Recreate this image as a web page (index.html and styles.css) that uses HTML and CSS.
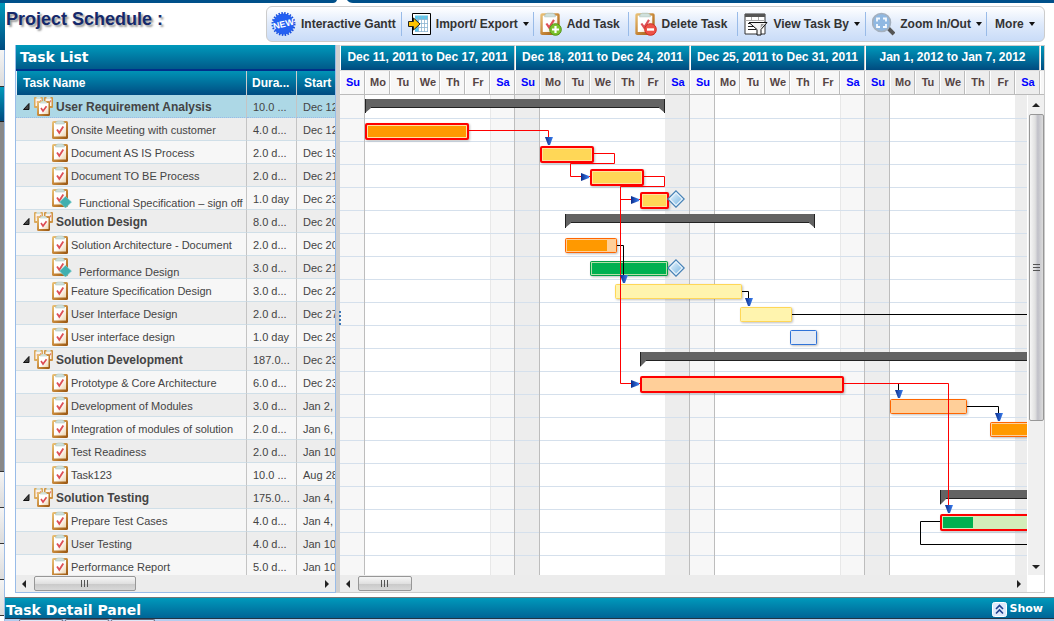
FILE: index.html
```html
<!DOCTYPE html>
<html lang="en">
<head>
<meta charset="utf-8">
<title>Project Schedule</title>
<link rel="stylesheet" href="styles.css">
</head>
<body>
<svg class="defs" aria-hidden="true">
  <defs>
    <linearGradient id="wood" x1="0" y1="0" x2="1" y2="1">
      <stop offset="0" stop-color="#ecc67c"/><stop offset=".5" stop-color="#c8893a"/><stop offset="1" stop-color="#96530f"/>
    </linearGradient>
    <linearGradient id="paper" x1="0" y1="0" x2="1" y2="1">
      <stop offset=".5" stop-color="#ffffff"/><stop offset="1" stop-color="#ecd2ac"/>
    </linearGradient>
    <linearGradient id="sky" x1="0" y1="0" x2="1" y2="1">
      <stop offset="0" stop-color="#e2f1fc"/><stop offset="1" stop-color="#7db8e2"/>
    </linearGradient>
    <linearGradient id="arrowBlue" x1="0" y1="0" x2="1" y2="0">
      <stop offset="0" stop-color="#0a2c8c"/><stop offset="1" stop-color="#3c80f0"/>
    </linearGradient>
    <symbol id="clip" viewBox="0 0 16 19">
      <rect x="0" y="1" width="16" height="18" rx="1.500" fill="url(#wood)"/>
      <rect x="2" y="3" width="12" height="13.500" fill="url(#paper)"/>
      <path d="M3.500 4q0-3 2.500-3h4q2.500 0 2.500 3z" fill="#cfe0dc" stroke="#a9c0ba" stroke-width=".5"/>
      <path d="M5 9.500l2.300 3.300L11.300 6.500" fill="none" stroke="#dc5058" stroke-width="1.800"/>
    </symbol>
    <symbol id="group" viewBox="0 0 19 20">
      <rect x="0" y="1" width="9" height="11" rx="1" fill="#dba95a"/><rect x="1.500" y="2.500" width="6" height="7.500" fill="#fbf3ea"/>
      <path d="M2.500 1h4v2h-4z" fill="#cfe0dc"/>
      <path d="M3 5.500l1.500 2L7 4.500" fill="none" stroke="#e07870" stroke-width="1.300"/>
      <rect x="10" y="1" width="9" height="11" rx="1" fill="#cf9342"/><rect x="11.500" y="2.500" width="6" height="7.500" fill="#fbf3ea"/>
      <path d="M12.500 1h4v2h-4z" fill="#cfe0dc"/>
      <path d="M13 5.500l1.500 2L17 4.500" fill="none" stroke="#e07870" stroke-width="1.300"/>
      <rect x="3" y="5" width="13" height="15" rx="1.500" fill="url(#wood)"/><rect x="5" y="7" width="9.500" height="11" fill="url(#paper)"/>
      <path d="M6 7.500q0-2.500 3.500-2.500t3.500 2.500z" fill="#cfe0dc"/>
      <path d="M7 12l2 3L12.500 10.200" fill="none" stroke="#dc4a52" stroke-width="1.600"/>
    </symbol>
    <symbol id="mile" viewBox="0 0 20 20">
      <use href="#clip" x="0" y="0" width="16" height="19"/>
      <path d="M13.500 8.500l6 5.500-6 6-6-6z" fill="#3fb0b0" stroke="#7fd0ce" stroke-width=".6"/>
    </symbol>
    <symbol id="fold" viewBox="0 0 7 7"><path d="M6 0.500v6H0.500z" fill="#444" stroke="#111"/></symbol>
    <symbol id="down" viewBox="0 0 8 8"><path d="M0 0h8L5 8H3z" fill="url(#arrowBlue)"/></symbol>
    <symbol id="right" viewBox="0 0 8 8"><path d="M0 0v8l8-3V3z" fill="url(#arrowBlue)"/></symbol>
    <symbol id="diamond" viewBox="0 0 18 18">
      <path d="M9 .8L17.200 9 9 17.200.8 9z" fill="#e9f4fc" stroke="#4580b5" stroke-width="1.200"/>
      <path d="M9 3.500L14.500 9 9 14.500 3.500 9z" fill="url(#sky)"/>
    </symbol>
  </defs>
</svg>

<div class="topline"><svg class="notch" viewBox="0 0 20 3" aria-hidden="true"><path d="M0 3q3 0 4-3h10q2 3 6 3z" fill="#fff"/></svg></div>
<div class="page">
  <div class="rail" aria-hidden="true">
    <i class="r-blue r-first"></i><i class="r-light r-a"></i><i class="r-blue r-b"></i><i class="r-gray"></i><i class="r-light"></i><i class="r-light"></i><i class="r-light"></i><i class="r-light"></i>
  </div>
  <main class="main">
    <header class="head">
      <h1>Project Schedule :</h1>
      <div class="toolbar">
        <button type="button"><svg class="ic" width="25" height="24" viewBox="0 0 25 24"><circle cx="12.500" cy="12" r="10.500" fill="#2460f2"/><circle cx="12.500" cy="12" r="11" fill="none" stroke="#1a50dc" stroke-width="2" stroke-dasharray="1.500 1.400"/><text class="newtag" x="12.500" y="15" transform="rotate(-14 12.500 12)">NEW</text></svg><span>Interactive Gantt</span></button>
        <button type="button"><svg class="ic" width="23" height="24" viewBox="0 0 23 24"><path d="M4.500 1.500h18v21h-18z" fill="#fff" stroke="#000"/><path d="M7 3.500h13v4H7zM7 8h3.500v12H7z" fill="#5cc8ec"/><path d="M7 7.500h13M7 11.500h13M7 15.500h13M7 19.500h13M10.500 4v16M13.500 4v16M16.500 4v16M19.500 4v16" stroke="#8ab4d0" stroke-width=".8" fill="none"/><path d="M.5 9.500h5v-3.500l6.500 6-6.500 6v-3.500h-5z" fill="#ffc400" stroke="#222"/></svg><span>Import/ Export</span><i class="caret"></i></button>
        <button type="button"><svg class="ic" width="22" height="24" viewBox="0 0 22 24"><use href="#clip" width="20" height="23"/><circle cx="15.500" cy="17.500" r="5.800" fill="#7cc22c" stroke="#4f9414"/><path d="M15.500 14v7M12 17.500h7" stroke="#fff" stroke-width="2.200"/></svg><span>Add Task</span></button>
        <button type="button"><svg class="ic" width="22" height="24" viewBox="0 0 22 24"><use href="#clip" width="20" height="23"/><circle cx="15.500" cy="17.500" r="5.800" fill="#ee5348" stroke="#d02a20"/><path d="M12 17.500h7" stroke="#fff" stroke-width="2.400"/></svg><span>Delete Task</span></button>
        <button type="button"><svg class="ic" width="24" height="24" viewBox="0 0 24 24"><path d="M1 2h20v20H1z" fill="#fff" stroke="#333"/><path d="M1 2h20v3H1z" fill="#555"/><path d="M1 8.500h20M7.500 5v4M14.500 5v4" stroke="#aaa"/><path d="M4 11.500h6M4 14.500h8M4 17.500h8" stroke="#222"/><path d="M5 10.500h18l-6 7v5.500h-4v-5.500z" fill="#f2f2f2" stroke="#111"/><path d="M17 12h3l-3.500 4z" fill="#999"/></svg><span>View Task By</span><i class="caret"></i></button>
        <button type="button"><svg class="ic" width="23" height="24" viewBox="0 0 23 24"><path d="M16 16l6 6" stroke="#555" stroke-width="4"/><circle cx="9.500" cy="10.500" r="9" fill="#8fb8e2" stroke="#a4b0be" stroke-width="1.600"/><path d="M5 9.500V6.500h3M11 6.500h3v3M14 12v3h-3M8 15H5v-3" fill="none" stroke="#f5faff" stroke-width="1.800"/></svg><span>Zoom In/Out</span><i class="caret"></i></button>
        <button type="button"><span>More</span><i class="caret"></i></button>
      </div>
    </header>

    <div class="work">
      <section class="tasks">
        <h2>Task List</h2>
        <div class="tbody">
          <table>
            <colgroup><col class="c-name"><col class="c-dur"><col></colgroup>
            <thead><tr><th>Task Name</th><th>Dura...</th><th>Start</th></tr></thead>
            <tbody>
              <tr class="sel"><td><div class="grp"><svg class="f"><use href="#fold"/></svg><svg class="g"><use href="#group"/></svg><span>User Requirement Analysis</span></div></td><td>10.0 ...</td><td>Dec 12</td></tr>
              <tr><td><div class="tk"><svg class="c"><use href="#clip"/></svg><span>Onsite Meeting with customer</span></div></td><td>4.0 d...</td><td>Dec 12</td></tr>
              <tr><td><div class="tk"><svg class="c"><use href="#clip"/></svg><span>Document AS IS Process</span></div></td><td>2.0 d...</td><td>Dec 19</td></tr>
              <tr><td><div class="tk"><svg class="c"><use href="#clip"/></svg><span>Document TO BE Process</span></div></td><td>2.0 d...</td><td>Dec 21</td></tr>
              <tr><td><div class="tk ms"><svg class="m"><use href="#mile"/></svg><span>Functional Specification – sign off</span></div></td><td>1.0 day</td><td>Dec 23</td></tr>
              <tr><td><div class="grp"><svg class="f"><use href="#fold"/></svg><svg class="g"><use href="#group"/></svg><span>Solution Design</span></div></td><td>8.0 d...</td><td>Dec 20</td></tr>
              <tr><td><div class="tk"><svg class="c"><use href="#clip"/></svg><span>Solution Architecture - Document</span></div></td><td>2.0 d...</td><td>Dec 20</td></tr>
              <tr><td><div class="tk ms"><svg class="m"><use href="#mile"/></svg><span>Performance Design</span></div></td><td>3.0 d...</td><td>Dec 21</td></tr>
              <tr><td><div class="tk"><svg class="c"><use href="#clip"/></svg><span>Feature Specification Design</span></div></td><td>3.0 d...</td><td>Dec 22</td></tr>
              <tr><td><div class="tk"><svg class="c"><use href="#clip"/></svg><span>User Interface Design</span></div></td><td>2.0 d...</td><td>Dec 27</td></tr>
              <tr><td><div class="tk"><svg class="c"><use href="#clip"/></svg><span>User interface design</span></div></td><td>1.0 day</td><td>Dec 29</td></tr>
              <tr><td><div class="grp"><svg class="f"><use href="#fold"/></svg><svg class="g"><use href="#group"/></svg><span>Solution Development</span></div></td><td>187.0...</td><td>Dec 23</td></tr>
              <tr><td><div class="tk"><svg class="c"><use href="#clip"/></svg><span>Prototype &amp; Core Architecture</span></div></td><td>6.0 d...</td><td>Dec 23</td></tr>
              <tr><td><div class="tk"><svg class="c"><use href="#clip"/></svg><span>Development of Modules</span></div></td><td>3.0 d...</td><td>Jan 2,</td></tr>
              <tr><td><div class="tk"><svg class="c"><use href="#clip"/></svg><span>Integration of modules of solution</span></div></td><td>2.0 d...</td><td>Jan 6,</td></tr>
              <tr><td><div class="tk"><svg class="c"><use href="#clip"/></svg><span>Test Readiness</span></div></td><td>2.0 d...</td><td>Jan 10</td></tr>
              <tr><td><div class="tk"><svg class="c"><use href="#clip"/></svg><span>Task123</span></div></td><td>10.0 ...</td><td>Aug 28</td></tr>
              <tr><td><div class="grp"><svg class="f"><use href="#fold"/></svg><svg class="g"><use href="#group"/></svg><span>Solution Testing</span></div></td><td>175.0...</td><td>Jan 4,</td></tr>
              <tr><td><div class="tk"><svg class="c"><use href="#clip"/></svg><span>Prepare Test Cases</span></div></td><td>4.0 d...</td><td>Jan 4,</td></tr>
              <tr><td><div class="tk"><svg class="c"><use href="#clip"/></svg><span>User Testing</span></div></td><td>4.0 d...</td><td>Jan 10</td></tr>
              <tr><td><div class="tk"><svg class="c"><use href="#clip"/></svg><span>Performance Report</span></div></td><td>5.0 d...</td><td>Jan 10</td></tr>
            </tbody>
          </table>
        </div>
        <div class="hscroll"><i class="al"></i><div class="track"><b class="thumb t-left"></b></div><i class="ar"></i></div>
      </section>

      <div class="split"><i class="grip"></i></div>

      <section class="chart">
        <div class="weeks">
          <div class="week"><h3>Dec 11, 2011 to Dec 17, 2011</h3><div class="days"><span>Su</span><span>Mo</span><span>Tu</span><span>We</span><span>Th</span><span>Fr</span><span>Sa</span></div></div>
          <div class="week"><h3>Dec 18, 2011 to Dec 24, 2011</h3><div class="days"><span>Su</span><span>Mo</span><span>Tu</span><span>We</span><span>Th</span><span>Fr</span><span>Sa</span></div></div>
          <div class="week"><h3>Dec 25, 2011 to Dec 31, 2011</h3><div class="days"><span>Su</span><span>Mo</span><span>Tu</span><span>We</span><span>Th</span><span>Fr</span><span>Sa</span></div></div>
          <div class="week"><h3>Jan 1, 2012 to Jan 7, 2012</h3><div class="days"><span>Su</span><span>Mo</span><span>Tu</span><span>We</span><span>Th</span><span>Fr</span><span>Sa</span></div></div>
          <div class="week"><h3></h3><div class="days"><span></span></div></div>
        </div>
        <div class="body">
          <div class="canvas">
            <svg class="gantt" width="760" height="480" viewBox="340 95 760 480" role="img" aria-label="Gantt chart">
              <defs><pattern id="rows" x="340" y="96" width="10" height="23" patternUnits="userSpaceOnUse"><path d="M0 22.500h10" stroke="#d5e0ec"/></pattern></defs>
              <g fill="#f7f7f7"><path d="M340 95h24v480h-24zM490 95h24v480h-24zM690 95h24v480h-24zM840 95h24v480h-24z"/></g>
              <g fill="#ededed"><path d="M515 95h24v480h-24zM665 95h24v480h-24zM865 95h24v480h-24zM1015 95h24v480h-24z"/></g>
              <path d="M490.500 95v480M840.500 95v480" stroke="#e8e8e8"/>
              <rect x="340" y="96" width="760" height="479" fill="url(#rows)"/>
              <path d="M364.500 95v480M514.500 95v480M539.500 95v480M689.500 95v480M714.500 95v480M864.500 95v480M889.500 95v480" stroke="#bdbdbd"/>

              <g class="sum">
                <path d="M365 99h300v14l-6-5H371l-6 5z"/><path d="M565 214h250v14l-6-5H571l-6 5z"/><path d="M640 352h460v9H646l-6 6z"/><path d="M940 490h160v9H946l-6 6z"/>
              </g>
              <path class="edge" d="M365.500 99v14M371 107.500h288M664.500 99v14M565.500 214v14M571 222.500h238M814.500 214v14M640.500 352v14M646 360.500h454M940.500 490v14M946 498.500h154"/>

              <g class="bars">
                <rect class="crit" x="366" y="124" width="102" height="15" rx="1" fill="#ff9900"/>
                <rect class="crit" x="541" y="147" width="52" height="15" rx="1" fill="#ffd757"/>
                <rect class="crit" x="591" y="170" width="52" height="15" rx="1" fill="#ffd757"/>
                <rect class="crit" x="641" y="193" width="27" height="15" rx="1" fill="#ffd757"/>
                <rect class="crit" x="641" y="377" width="202" height="15" rx="1" fill="#ffcf99"/>
                <rect class="crit" x="941" y="515" width="180" height="15" rx="1" fill="#d3edb9"/>
                <rect x="943" y="517" width="30" height="11" fill="#00b050"/>
                <rect x="565.500" y="238.500" width="51" height="14" rx="1" fill="#ffcf99" stroke="#ff6600"/>
                <rect x="567" y="240" width="40" height="11" fill="#ff9900"/>
                <rect x="590.500" y="261.500" width="77" height="14" rx="1" fill="#00b050" stroke="#00a045"/>
                <rect x="591.500" y="262.500" width="75" height="12" fill="none" stroke="#b5dfa8"/>
                <rect x="615.500" y="284.500" width="126" height="14" rx="1" fill="#fff4ae" stroke="#ffd757"/>
                <rect x="740.500" y="307.500" width="51" height="14" rx="1" fill="#fff4ae" stroke="#ffd757"/>
                <rect x="790.500" y="330.500" width="26" height="14" rx="1" fill="#e3ebf7" stroke="#2f73d8"/>
                <rect x="890.500" y="399.500" width="76" height="14" rx="1" fill="#ffcf99" stroke="#ff6600"/>
                <rect x="990.500" y="422.500" width="100" height="14" rx="1" fill="#ff9900" stroke="#ff6600"/>
                <rect x="991.500" y="423.500" width="98" height="12" fill="none" stroke="#ffcf99"/>
              </g>
              <g class="halo"><path d="M367.500 125.500h99v12h-99zM542.500 148.500h49v12h-49zM592.500 171.500h49v12h-49zM642.500 194.500h24v12h-24z"/></g>

              <g fill="none" stroke="#000">
                <path d="M617 245.500h6.500V276M742 291.500h6.500V299M792 314.500h308M898.500 384v7M967 406.500h31.500V414M940 521.500h-19.500v23h180"/>
              </g>
              <g fill="none" stroke="#f00">
                <path d="M469 130.500h79.500V138M594 153.500h20.500v10h-44v13H590M644 176.500h20.500v10h-44v197H640M620.500 199.500H640M844 383.500h104.500V506"/>
              </g>
              <g>
                <use href="#down" x="545" y="137" width="8" height="8"/><use href="#right" x="581" y="173" width="8" height="8"/><use href="#right" x="631" y="196" width="8" height="8"/><use href="#right" x="631" y="380" width="8" height="8"/>
                <use href="#down" x="620" y="275" width="8" height="8"/><use href="#down" x="745" y="298" width="8" height="8"/><use href="#down" x="895" y="390" width="8" height="8"/><use href="#down" x="995" y="413" width="8" height="8"/><use href="#down" x="945" y="505" width="8" height="8"/>
                <use href="#diamond" x="667" y="190" width="18" height="18"/><use href="#diamond" x="667" y="259" width="18" height="18"/>
              </g>
            </svg>
          </div>
          <div class="vscroll"><i class="au"></i><div class="vtrack"><b class="vthumb"></b></div><i class="ad"></i></div>
        </div>
        <div class="foot">
          <div class="hscroll"><i class="al"></i><div class="track"><b class="thumb t-right"></b></div><i class="ar"></i></div>
        </div>
      </section>
    </div>

    <div class="detail">
      <h2>Task Detail Panel</h2>
      <button type="button"><svg width="15" height="15" viewBox="0 0 15 15"><rect x=".5" y=".5" width="14" height="14" rx="2" fill="#dfe9fb" stroke="#fff"/><path d="M4 7l3.500-3.500L11 7M4 11.500L7.500 8l3.500 3.500" fill="none" stroke="#1f3f8f" stroke-width="1.600"/></svg>Show</button>
    </div>
    <div class="tabs" aria-hidden="true"><i></i><i></i><i></i></div>
  </main>
</div>
</body>
</html>
```

FILE: styles.css
```css
* { box-sizing: border-box; }
html, body { height: 100%; }
body { margin: 0; background: #fff; font: 11px/14px "Liberation Sans", Arial, sans-serif; color: #333; display: flex; flex-direction: column; overflow: hidden; }
h1, h2, h3 { margin: 0; }
i, b { display: block; }
button { font: inherit; border: 0; background: none; padding: 0; cursor: pointer; }
.defs { position: absolute; width: 0; height: 0; }

.topline { flex: none; height: 3px; background: #00508a; padding-left: 333px; }
.notch { display: block; width: 20px; height: 3px; }
.page { flex: 1; display: flex; min-height: 0; }

.rail { flex: none; width: 5px; display: flex; flex-direction: column; border-right: 1px solid #9dbce6; }
.r-blue { background: linear-gradient(#0099bb, #004b80); flex: none; height: 35px; border-bottom: 1px solid #222; }
.r-first { height: 47px; margin-right: -1px; border: 0; }
.r-light { flex: none; height: 36px; background: linear-gradient(#f4f4f4, #dcdcdc); border-bottom: 1px solid #333; }
.r-a { height: 37px; }
.r-gray { flex: none; height: 350px; background: #888; border-bottom: 1px solid #333; }

.main { flex: 1; min-width: 0; display: flex; flex-direction: column; }
.head { flex: none; height: 42px; display: flex; justify-content: space-between; align-items: flex-start; padding: 3px 9px 0 1px; }
.head h1 { font-size: 18px; line-height: 26px; color: #15296b; text-shadow: 2px 2px 2px #999; white-space: nowrap; }

.toolbar { width: 779px; height: 36px; display: grid; grid-template-columns: 135fr 132fr 95fr 110fr 128fr 121fr 57fr; align-items: center; border: 1px solid #ccc; border-radius: 6px; background: linear-gradient(#fff, #dfeafb 50%, #c9dcf8); }
.toolbar button { height: 24px; display: flex; align-items: center; gap: 5px; padding-left: 6px; border-right: 1px solid #99bbe8; font-weight: bold; font-size: 12px; color: #333; white-space: nowrap; }
.toolbar button:first-child { padding-left: 4px; }
.toolbar button:last-child { border: 0; padding-left: 8px; }
.ic { flex: none; display: block; }
.newtag { font: bold 9px "Liberation Sans", Arial, sans-serif; fill: #fff; text-anchor: middle; }
.caret { border: 3px solid transparent; border-top: 4px solid #111; border-bottom: 0; }

.work { flex: none; display: flex; }
.tasks { flex: none; width: 321px; margin-left: 10px; border: 1px solid #99bce8; border-top: 0; display: flex; flex-direction: column; overflow: hidden; }
.tasks h2 { height: 26px; padding: 0 4px; font: bold 14px/24px "DejaVu Sans", Verdana, sans-serif; color: #fff; background: linear-gradient(#0099bb, #005a8a); border-bottom: 2px solid #00308a; }
.tbody { height: 504px; overflow: hidden; }
table { table-layout: fixed; width: 400px; border-collapse: separate; border-spacing: 0; }
.c-name { width: 231px; }
.c-dur { width: 50px; }
th { height: 24px; padding: 0 7px; text-align: left; font-size: 12px; line-height: 14px; color: #fff; background: linear-gradient(#0093b6, #004c82); border-right: 1px solid #ccc; white-space: nowrap; }
th:first-child { border-left: 1px solid #e4f0fa; padding-left: 6px; }
th:nth-child(2) { padding: 0 5px; }
td { height: 23px; padding: 0 6px; border-right: 1px solid #c4c4c4; border-bottom: 1px solid #d0dfe8; background: #f7f7f7; white-space: nowrap; color: #444; }
tr:nth-child(even) td { background: #ededed; }
tr.sel td { background: #add8e6; border-bottom: 1px dotted #99bbe8; }
td:nth-child(2), td:nth-child(3) { padding-top: 1px; }
td:first-child { padding: 0; }
td:first-child div { display: flex; align-items: center; gap: 3px; height: 22px; }
td:first-child span { padding-top: 2px; }
.tk { padding-left: 36px; }
.grp { padding-left: 7px; font-weight: bold; font-size: 12px; }
td:first-child .ms span { padding: 10px 0 0 4px; }
td svg { display: block; flex: none; }
.f { width: 7px; height: 7px; margin-right: 1px; }
.g { width: 19px; height: 20px; }
.c { width: 16px; height: 19px; }
.m { width: 20px; height: 20px; }

.hscroll { flex: 1; height: 17px; display: flex; align-items: center; background: #ececec; padding: 0 6px; }
.tasks .hscroll { flex: none; }
.track { flex: 1; padding-left: 8px; }
.thumb { height: 15px; border: 1px solid #979797; border-radius: 2px; background: repeating-linear-gradient(90deg, #555 0 1px, transparent 1px 3px) center / 8px 7px no-repeat, linear-gradient(#f6f6f6, #e0e0e0 50%, #c8c8c8 51%, #d8d8d8); }
.t-left { width: 102px; }
.t-right { width: 54px; }
.al { border: 4px solid transparent; border-left: 0; border-right-color: #222; }
.ar { border: 4px solid transparent; border-right: 0; border-left-color: #222; }
.au { border: 4px solid transparent; border-top: 0; border-bottom-color: #222; }
.ad { border: 4px solid transparent; border-bottom: 0; border-top-color: #222; }

.split { flex: none; width: 4px; background: #d0d0d0; position: relative; }
.grip { position: absolute; left: 3px; top: 266px; width: 2px; height: 15px; background: repeating-linear-gradient(#3d78b8 0 2px, transparent 2px 4px); }

.chart { flex: 1; min-width: 0; margin-right: 9px; border-right: 1px solid #ccc; border-bottom: 1px solid #ccc; }
.weeks { display: flex; overflow: hidden; height: 50px; }
.week { flex: none; width: 175px; }
.week h3 { height: 25px; border: 1px solid #ccc; border-width: 1px 1px 0 1px; border-left-color: #fff; font-size: 12px; line-height: 22px; text-align: center; color: #fff; background: linear-gradient(#0099bb, #004b80); }
.days { display: flex; border-top: 1px solid #ddd; }
.days span { flex: none; width: 25px; height: 24px; padding-left: 2px; border: 1px solid #bbb; border-width: 0 1px 1px 0; box-shadow: inset 1px 0 #fff; background: #f7f7f7; font-weight: bold; text-align: center; line-height: 23px; color: #544; }
.week:nth-child(even) .days span { background: #ededed; }
.days span:first-child, .days span:last-child { color: #00f; }

.body { display: flex; height: 480px; }
.canvas { flex: 1; min-width: 0; overflow: hidden; }
.gantt { display: block; }
.sum { fill: #636363; }
.edge { stroke: #222; fill: none; }
.bars { filter: drop-shadow(1px 1px 1px rgba(0, 0, 0, .25)); }
.crit { stroke: #f00; stroke-width: 2px; }
.halo { fill: none; stroke: #ffe2a0; }
.vscroll { flex: none; width: 17px; display: flex; flex-direction: column; align-items: center; padding: 8px 0 6px; background: #f0f0f0; border-left: 1px solid #fff; }
.vtrack { flex: 1; padding-top: 7px; }
.vthumb { width: 15px; height: 307px; border: 1px solid #979797; border-radius: 2px; background: repeating-linear-gradient(#555 0 1px, transparent 1px 3px) center / 7px 8px no-repeat, linear-gradient(90deg, #f6f6f6, #e0e0e0 40%, #c0c0c8 60%, #dcdcdc); }
.foot { height: 17px; padding-right: 17px; display: flex; }

.detail { flex: none; height: 22px; margin-top: 4px; padding: 0 11px 0 1px; display: flex; justify-content: space-between; align-items: center; background: linear-gradient(#0099bb, #006496); border-top: 1px solid #777; border-bottom: 1px solid #234; color: #fff; }
.detail h2 { font: bold 14px/18px "DejaVu Sans", Verdana, sans-serif; padding-top: 4px; }
.detail button { display: flex; align-items: center; gap: 3px; padding-top: 2px; color: #fff; font: bold 11px/14px "DejaVu Sans", Verdana, sans-serif; }
.tabs { flex: 1; display: flex; gap: 2px; padding-left: 14px; background: #b4cdf0; }
.tabs i { width: 44px; border: 1px solid #667; border-bottom: 0; border-radius: 3px 3px 0 0; background: #dde8f8; }
```
